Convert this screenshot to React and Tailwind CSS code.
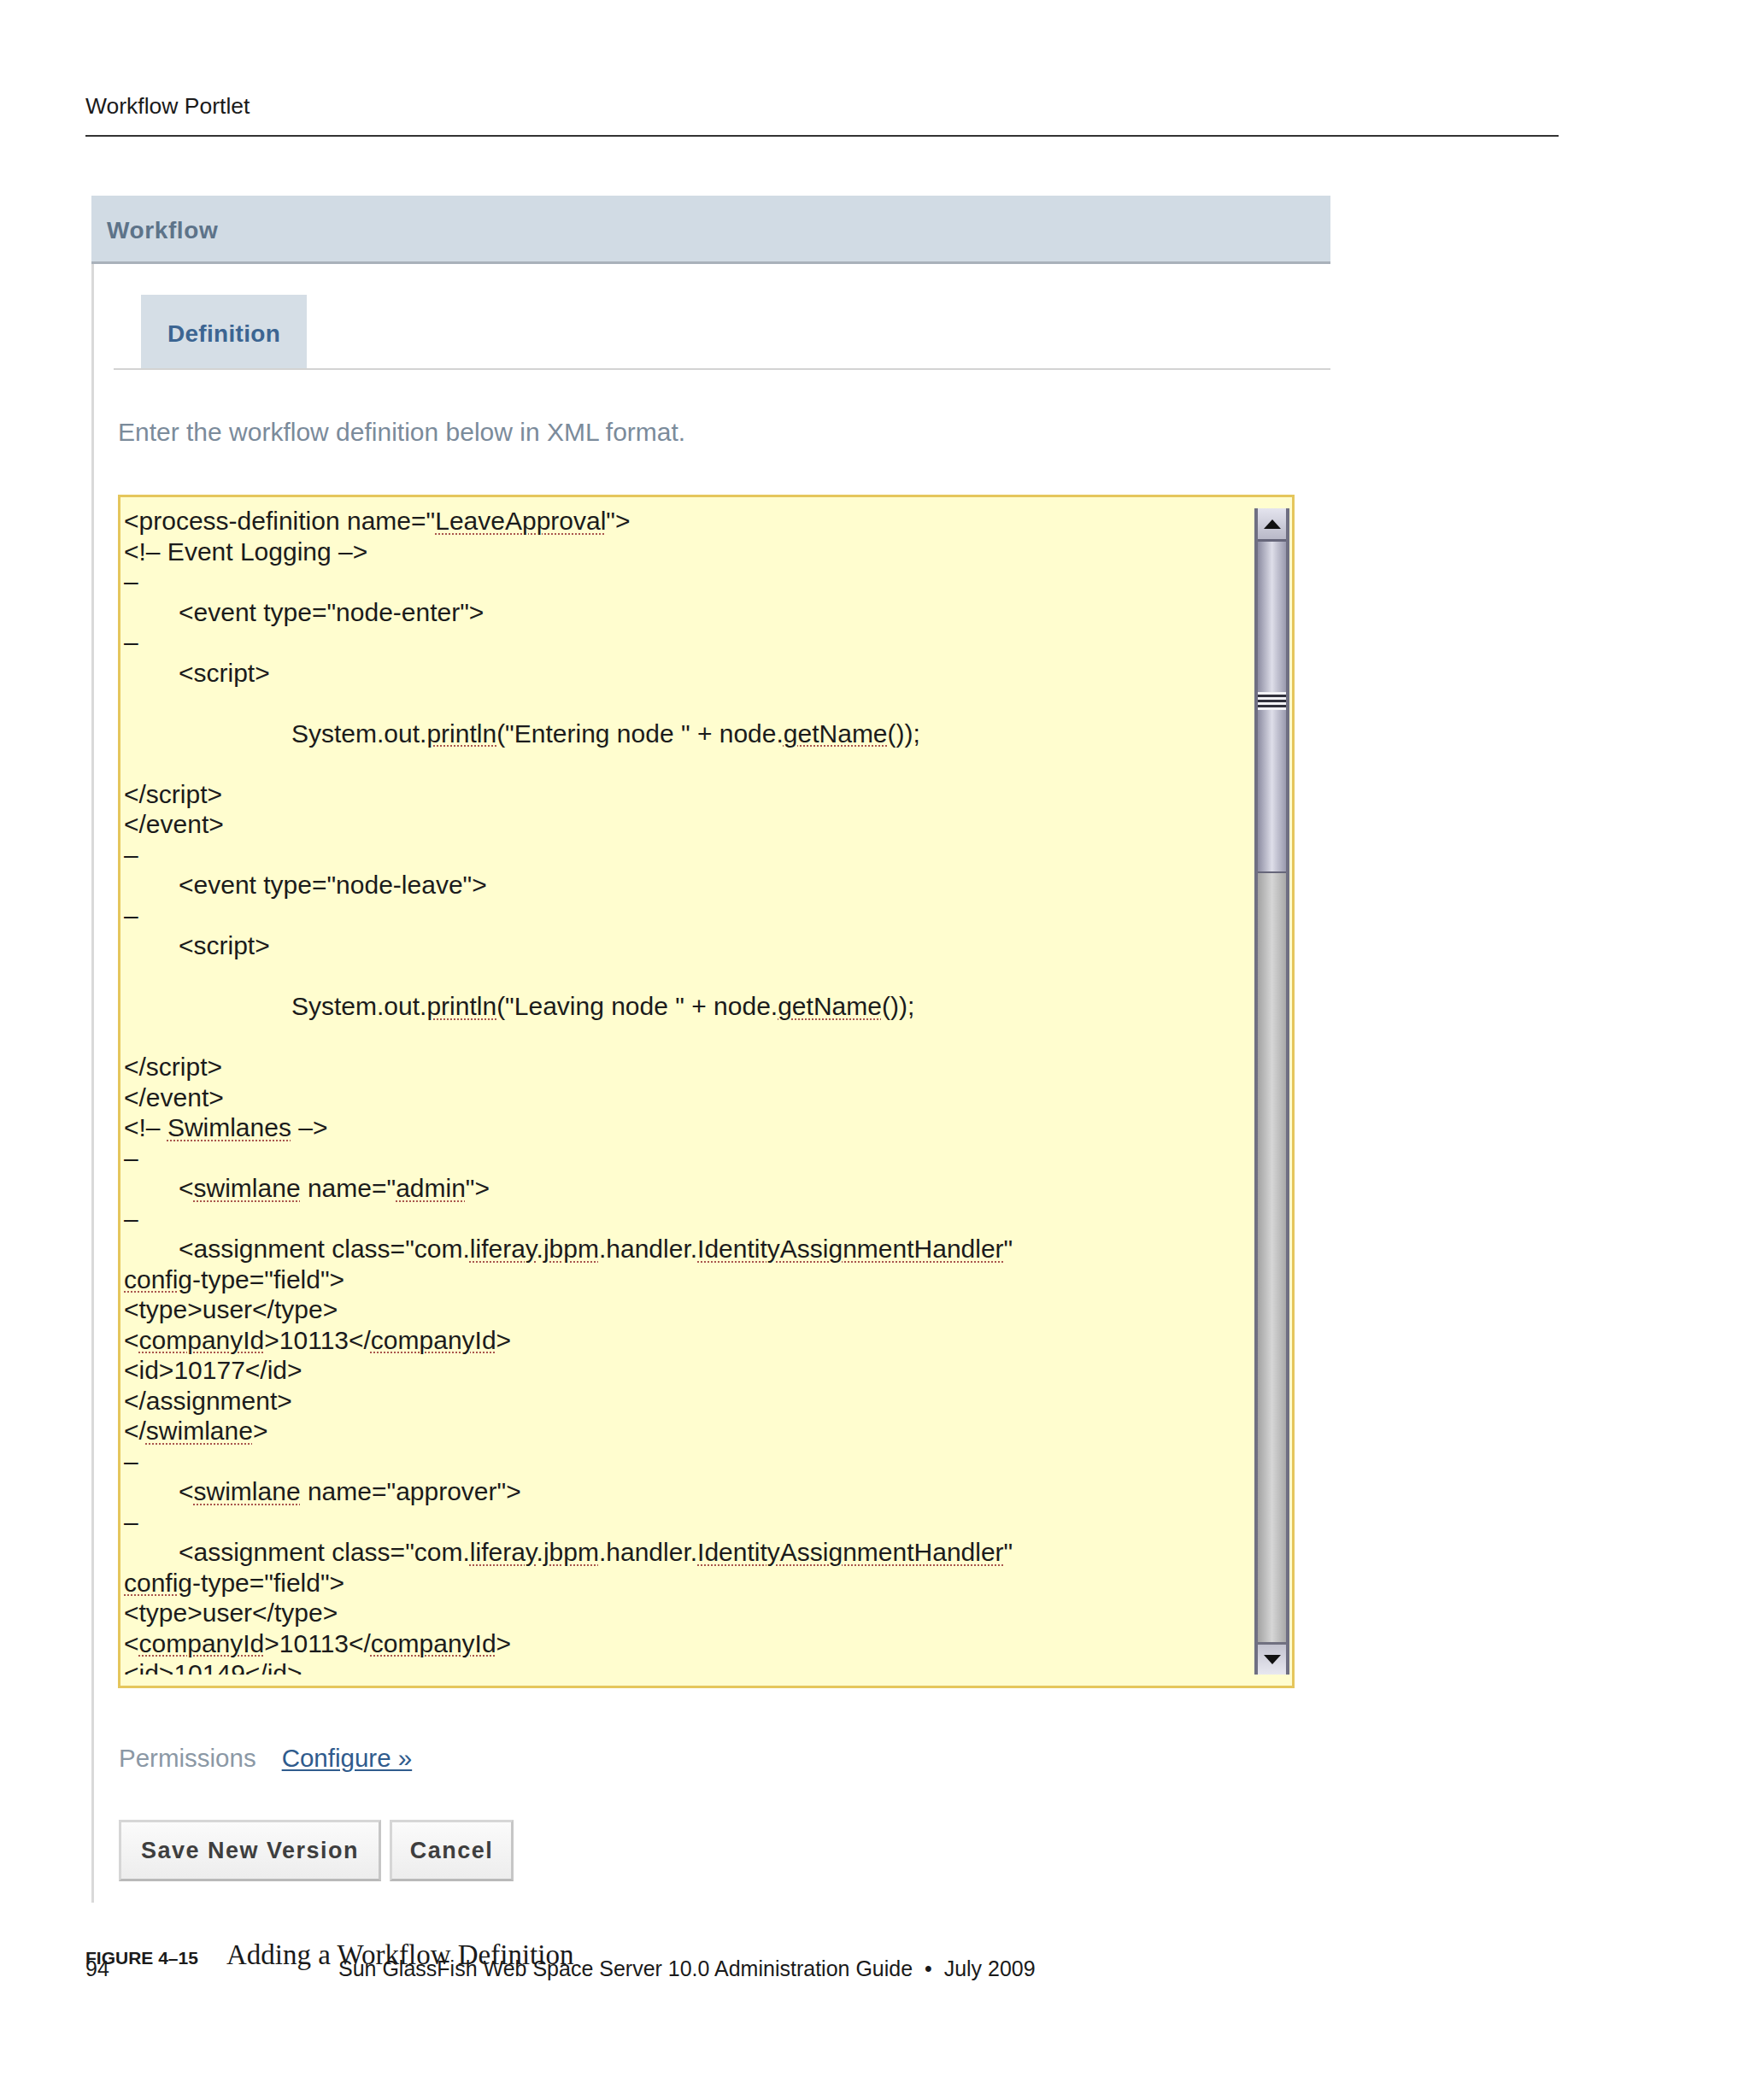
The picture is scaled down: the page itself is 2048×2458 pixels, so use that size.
import React from 'react'

const U = (w) => ({ u: w })

// xml lines shown in the definition box: [indent, segments]
const lines = [
  [0, ['<process-definition name="', U('LeaveApproval'), '">']],
  [0, ['<!– Event Logging –>']],
  [0, ['–']],
  [1, ['<event type="node-enter">']],
  [0, ['–']],
  [1, ['<script>']],
  [0, ['']],
  [2, ['System.out.', U('println'), '("Entering node " + node.', U('getName'), '());']],
  [0, ['']],
  [0, ['</script>']],
  [0, ['</event>']],
  [0, ['–']],
  [1, ['<event type="node-leave">']],
  [0, ['–']],
  [1, ['<script>']],
  [0, ['']],
  [2, ['System.out.', U('println'), '("Leaving node " + node.', U('getName'), '());']],
  [0, ['']],
  [0, ['</script>']],
  [0, ['</event>']],
  [0, ['<!– ', U('Swimlanes'), ' –>']],
  [0, ['–']],
  [1, ['<', U('swimlane'), ' name="', U('admin'), '">']],
  [0, ['–']],
  [1, ['<assignment class="com.', U('liferay'), '.', U('jbpm'), '.handler.', U('IdentityAssignmentHandler'), '"']],
  [0, [U('config'), '-type="field">']],
  [0, ['<type>user</type>']],
  [0, ['<', U('companyId'), '>10113</', U('companyId'), '>']],
  [0, ['<id>10177</id>']],
  [0, ['</assignment>']],
  [0, ['</', U('swimlane'), '>']],
  [0, ['–']],
  [1, ['<', U('swimlane'), ' name="approver">']],
  [0, ['–']],
  [1, ['<assignment class="com.', U('liferay'), '.', U('jbpm'), '.handler.', U('IdentityAssignmentHandler'), '"']],
  [0, [U('config'), '-type="field">']],
  [0, ['<type>user</type>']],
  [0, ['<', U('companyId'), '>10113</', U('companyId'), '>']],
  [0, ['<id>10149</id>']],
  [0, ['</assignment>']],
  [0, ['</', U('swimlane'), '>']],
]

const indent = ['pl-0', 'pl-[64px]', 'pl-[196px]']

function CodeLine({ level, parts }) {
  const empty = parts.length === 1 && parts[0] === ''
  return (
    <div className={`h-[35.5px] leading-[35.5px] whitespace-pre ${indent[level]}`}>
      {parts.map((p, i) =>
        typeof p === 'string'
          ? <span key={i}>{p}</span>
          : <span key={i} className="underline decoration-dotted decoration-2 decoration-[#a9564c] underline-offset-[4px]">{p.u}</span>
      )}
      {empty ? '\u00a0' : null}
    </div>
  )
}

function Arrow({ down }) {
  return (
    <svg width="20" height="11" viewBox="0 0 20 11">
      {down
        ? <polygon points="0,0 20,0 10,11" fill="#111" />
        : <polygon points="10,0 20,11 0,11" fill="#111" />}
    </svg>
  )
}

function Scrollbar() {
  return (
    <div className="w-[41px] my-[13px] mr-[3px] flex flex-col border-x-[4px] border-[#6f6f82] bg-[#6f6f82]">
      {/* up button */}
      <div className="h-[39px] flex items-center justify-center border-b-[3px] border-[#66667a] bg-linear-to-b from-[#e4e4ee] to-[#b9b9c8]">
        <Arrow />
      </div>
      {/* thumb */}
      <div className="h-[388px] flex flex-col border-b-[2px] border-[#66667a] bg-linear-to-r from-[#8d8da2] via-[#dedee9] to-[#9a9aae]">
        <div className="h-[176px]" />
        <div className="h-[3px] bg-[#f2f2f6]" />
        <div className="h-[3px] bg-[#30303c]" />
        <div className="h-[3px] bg-[#f2f2f6]" />
        <div className="h-[3px] bg-[#30303c]" />
        <div className="h-[3px] bg-[#f2f2f6]" />
        <div className="h-[3px] bg-[#30303c]" />
        <div className="h-[3px] bg-[#f2f2f6]" />
      </div>
      {/* track */}
      <div className="flex-1 bg-linear-to-r from-[#a3a3a3] via-[#d6d6d6] to-[#a9a9a9]" />
      {/* down button */}
      <div className="h-[38px] flex items-center justify-center border-t-[3px] border-[#707080] bg-linear-to-b from-[#c4c4d0] to-[#e8e8f0]">
        <Arrow down />
      </div>
    </div>
  )
}

const btn = 'h-[72px] border-[3px] border-[#d6d6d6] border-b-[#b9b9b9] border-r-[#c6c6c6] bg-linear-to-b from-[#fbfbfb] to-[#ededed] text-[27px] tracking-[1.5px] font-bold text-[#3e3e3e]'

export default function App() {
  return (
    <div className="w-[2048px] min-h-[2458px] bg-white font-['Liberation_Sans',Arial,sans-serif] text-[#1a1a1a]">
      {/* page header */}
      <div className="ml-[100px] w-[1724px] pt-[109px] pb-[19px] border-b-2 border-[#333333]">
        <div className="text-[26.5px] leading-[30px]">Workflow Portlet</div>
      </div>

      {/* portlet */}
      <div className="ml-[107px] mt-[69px] w-[1450px]">
        <div className="h-[80px] pl-[18px] pt-[25px] bg-[#d1dbe4] border-b-[3px] border-[#a9b1ba]">
          <div className="text-[28px] leading-[32px] font-bold tracking-[0.6px] text-[#5d7389]">Workflow</div>
        </div>

        <div className="border-l-[3px] border-[#d9d9d9] pt-[36px] pb-[25px]">
          {/* tabs */}
          <div className="ml-[23px] border-b-2 border-[#d3d3d3] flex">
            <div className="ml-[32px] w-[194px] h-[86px] pt-[30px] bg-[#d5dee6] text-center text-[28px] leading-[32px] font-bold tracking-[0.3px] text-[#3c6592]">
              Definition
            </div>
          </div>

          <p className="ml-[28px] mt-[58px] text-[30px] leading-[29px] text-[#7b8b9b]">
            Enter the workflow definition below in XML format.
          </p>

          {/* definition box */}
          <div className="ml-[28px] mt-[59px] w-[1377px] h-[1397px] border-[3px] border-[#e5c65c] bg-[#fffdcf] flex">
            <div className="flex-1 mb-[13px] overflow-hidden pl-[4px] pt-[10px] text-[30px] text-[#1b1b1b]">
              {lines.map(([lvl, parts], i) => <CodeLine key={i} level={lvl} parts={parts} />)}
            </div>
            <Scrollbar />
          </div>

          <div className="ml-[29px] mt-[67px] flex text-[29.5px] leading-[29px]">
            <span className="text-[#8b98a5]">Permissions</span>
            <span className="ml-[30px] text-[#2f5b8d] underline underline-offset-[3px]">Configure »</span>
          </div>

          <div className="ml-[29px] mt-[58px] flex gap-[10px]">
            <button className={`w-[307px] ${btn}`}>Save New Version</button>
            <button className={`w-[145px] ${btn}`}>Cancel</button>
          </div>
        </div>
      </div>

      {/* caption + footer (they overlap in the original) */}
      <div className="ml-[100px] mt-[43px] h-[36px] font-['Liberation_Serif',serif] text-[33px] leading-[36px]">
        <span className="inline-block w-[165px] font-['Liberation_Sans',Arial,sans-serif] font-bold text-[21px] leading-none">FIGURE 4–15</span>
        <span>Adding a Workflow Definition</span>
      </div>
      <div className="ml-[100px] -mt-[14px] flex text-[25px] leading-[25px]">
        <span className="w-[296px]">94</span>
        <span className="whitespace-pre">Sun GlassFish Web Space Server 10.0 Administration Guide  •  July 2009</span>
      </div>
    </div>
  )
}
